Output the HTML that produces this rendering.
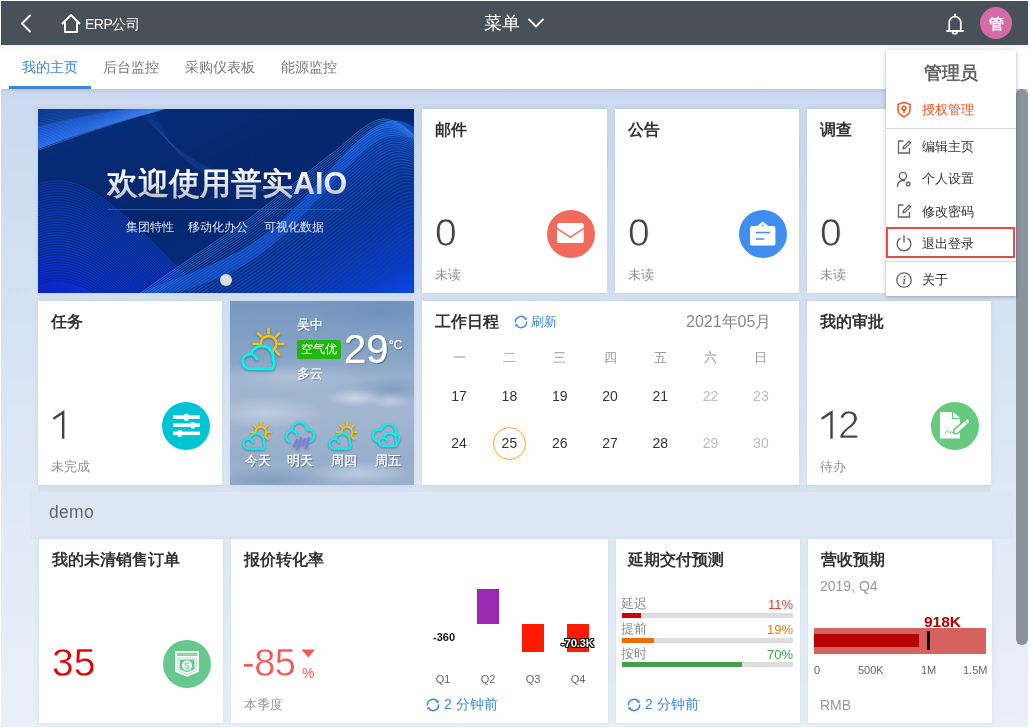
<!DOCTYPE html>
<html><head><meta charset="utf-8">
<style>
*{box-sizing:border-box}
html,body{margin:0;padding:0;width:1031px;height:728px;overflow:hidden;background:#fff;font-family:"Liberation Sans",sans-serif;}
body{will-change:transform}
.a{position:absolute}
.t{position:absolute;white-space:nowrap;line-height:1}
#hdr{left:1px;top:1px;width:1027px;height:44px;background:#4a5058;color:#fff}
#tabs{left:1px;top:45px;width:1027px;height:44px;background:#fff}
.tab{position:absolute;top:14px;font-size:14px;color:#777;line-height:16px;white-space:nowrap}
#main{left:1px;top:89px;width:1027px;height:638px;background:linear-gradient(#cad9ef 0,#d3e1f2 30%,#dee8f5 60%,#eaf0f9 100%)}
.card{position:absolute;background:#fff;overflow:hidden;box-shadow:0 0 5px rgba(40,70,120,.10)}
.ttl{position:absolute;left:13px;top:12px;font-size:16px;font-weight:bold;color:#333;line-height:18px;white-space:nowrap}
.num{position:absolute;left:13px;top:104px;font-size:39px;color:#444;line-height:40px;-webkit-text-stroke:0.7px #fff}
.sub{position:absolute;left:13px;top:158px;font-size:13px;color:#8f8f8f;line-height:16px;white-space:nowrap}
.ws{text-shadow:1px 1px 1px rgba(0,0,0,.4);-webkit-text-stroke:0.25px #fff}
.wi{filter:drop-shadow(0 1px 1px rgba(0,0,0,.35))}
.circ{position:absolute;width:48px;height:48px;border-radius:50%;right:12px;top:101px}
</style></head><body>
<div id="hdr" class="a">
  <svg class="a" style="left:18px;top:12px" width="14" height="22" viewBox="0 0 14 22"><path d="M11 2.5 L3 10.5 L11 18.5" fill="none" stroke="#f2f2f2" stroke-width="2" stroke-linecap="round" stroke-linejoin="round"/></svg>
  <svg class="a" style="left:59px;top:12px" width="22" height="22" viewBox="0 0 22 22"><path d="M2 11 L11 2 L20 11 M5 9 V19 H17 V9" fill="none" stroke="#fff" stroke-width="2" stroke-linejoin="round"/></svg>
  <div class="t" style="left:84px;top:16px;font-size:14px;color:#fff;letter-spacing:-0.5px">ERP公司</div>
  <div class="t" style="left:483px;top:13px;font-size:18px;color:#fff">菜单</div>
  <svg class="a" style="left:525px;top:15px" width="20" height="14" viewBox="0 0 20 14"><path d="M2.5 3 L10 10.5 L17.5 3" fill="none" stroke="#fff" stroke-width="1.9"/></svg>
  <svg class="a" style="left:944px;top:12px" width="20" height="22" viewBox="0 0 20 22"><path d="M10 1.5 V3 M4.2 17.5 V9.5 A5.8 5.8 0 0 1 15.8 9.5 V17.5 M2 18 H18 M7.6 18.5 A2.4 2.4 0 0 0 12.4 18.5" fill="none" stroke="#f4f4f4" stroke-width="1.8" stroke-linecap="round"/></svg>
  <div class="a" style="left:979px;top:6px;width:32px;height:32px;border-radius:50%;background:#d36ba7"></div>
  <div class="t" style="left:988px;top:15px;font-size:15px;font-weight:bold;color:#fff">管</div>
</div>
<div id="tabs" class="a">
  <div class="tab" style="left:21px;color:#3d86d8">我的主页</div>
  <div class="tab" style="left:102px">后台监控</div>
  <div class="tab" style="left:184px">采购仪表板</div>
  <div class="tab" style="left:280px">能源监控</div>
  <div class="a" style="left:8px;top:41px;width:82px;height:3px;background:#3a86dc"></div>
</div>
<div id="main" class="a"></div>
<div class="a" style="left:1px;top:45px;width:1027px;height:5px;background:linear-gradient(rgba(0,0,0,.06),rgba(0,0,0,0))"></div>
<div class="a" style="left:1px;top:89px;width:1027px;height:5px;background:linear-gradient(rgba(60,80,110,.12),rgba(60,80,110,0))"></div>

<!-- banner -->
<div class="card" style="left:38px;top:109px;width:376px;height:184px;background:#062c7a">
<svg class="a" style="left:0;top:0" width="376" height="184" viewBox="0 0 376 184">
  <defs>
    <linearGradient id="bg1" x1="0" y1="0" x2="1" y2="1"><stop offset="0" stop-color="#072e7c"/><stop offset=".45" stop-color="#05266b"/><stop offset="1" stop-color="#083396"/></linearGradient>
    <linearGradient id="rb2" x1="0.4" y1="0.3" x2="1" y2="1"><stop offset="0" stop-color="#0a3ea8"/><stop offset=".45" stop-color="#07318e"/><stop offset=".85" stop-color="#0a3cc4"/><stop offset="1" stop-color="#0c48ee"/></linearGradient>
    <linearGradient id="rb1" x1="0.55" y1="0.9" x2="0" y2="0"><stop offset="0" stop-color="#2a7aff"/><stop offset=".35" stop-color="#1656d8"/><stop offset="1" stop-color="#0b3a98"/></linearGradient>
    <linearGradient id="ll" x1="0.3" y1="0" x2="0.1" y2="1"><stop offset="0" stop-color="#0a3494"/><stop offset=".5" stop-color="#0a38b0"/><stop offset="1" stop-color="#0c30d0"/></linearGradient>
  </defs>
  <rect width="376" height="184" fill="url(#bg1)"/>
  <path d="M-2 75 C20 65 45 70 80 100 C110 125 140 160 170 186 L-2 186 Z" fill="url(#ll)"/><path d="M-2 75.0 C20 65.0 45 70.0 80 100.0 C110 125.0 140 160.0 170 186.0" stroke="#041c5a" stroke-opacity="0.55" stroke-width="1" fill="none"/><path d="M-2 77.6 C20 67.6 45 72.6 80 102.6 C110 127.6 140 162.6 170 188.6" stroke="#041c5a" stroke-opacity="0.55" stroke-width="1" fill="none"/><path d="M-2 80.2 C20 70.2 45 75.2 80 105.2 C110 130.2 140 165.2 170 191.2" stroke="#041c5a" stroke-opacity="0.55" stroke-width="1" fill="none"/><path d="M-2 82.8 C20 72.8 45 77.8 80 107.8 C110 132.8 140 167.8 170 193.8" stroke="#041c5a" stroke-opacity="0.55" stroke-width="1" fill="none"/><path d="M-2 85.4 C20 75.4 45 80.4 80 110.4 C110 135.4 140 170.4 170 196.4" stroke="#041c5a" stroke-opacity="0.55" stroke-width="1" fill="none"/><path d="M-2 88.0 C20 78.0 45 83.0 80 113.0 C110 138.0 140 173.0 170 199.0" stroke="#041c5a" stroke-opacity="0.55" stroke-width="1" fill="none"/><path d="M-2 90.6 C20 80.6 45 85.6 80 115.6 C110 140.6 140 175.6 170 201.6" stroke="#041c5a" stroke-opacity="0.55" stroke-width="1" fill="none"/><path d="M-2 93.2 C20 83.2 45 88.2 80 118.2 C110 143.2 140 178.2 170 204.2" stroke="#041c5a" stroke-opacity="0.55" stroke-width="1" fill="none"/><path d="M-2 95.8 C20 85.8 45 90.8 80 120.8 C110 145.8 140 180.8 170 206.8" stroke="#041c5a" stroke-opacity="0.55" stroke-width="1" fill="none"/><path d="M-2 98.4 C20 88.4 45 93.4 80 123.4 C110 148.4 140 183.4 170 209.4" stroke="#041c5a" stroke-opacity="0.55" stroke-width="1" fill="none"/><path d="M-2 101.0 C20 91.0 45 96.0 80 126.0 C110 151.0 140 186.0 170 212.0" stroke="#041c5a" stroke-opacity="0.55" stroke-width="1" fill="none"/><path d="M-2 103.6 C20 93.6 45 98.6 80 128.6 C110 153.6 140 188.6 170 214.6" stroke="#041c5a" stroke-opacity="0.55" stroke-width="1" fill="none"/><path d="M-2 106.2 C20 96.2 45 101.2 80 131.2 C110 156.2 140 191.2 170 217.2" stroke="#041c5a" stroke-opacity="0.55" stroke-width="1" fill="none"/><path d="M-2 108.8 C20 98.8 45 103.8 80 133.8 C110 158.8 140 193.8 170 219.8" stroke="#041c5a" stroke-opacity="0.55" stroke-width="1" fill="none"/><path d="M-2 111.4 C20 101.4 45 106.4 80 136.4 C110 161.4 140 196.4 170 222.4" stroke="#041c5a" stroke-opacity="0.55" stroke-width="1" fill="none"/><path d="M-2 114.0 C20 104.0 45 109.0 80 139.0 C110 164.0 140 199.0 170 225.0" stroke="#041c5a" stroke-opacity="0.55" stroke-width="1" fill="none"/><path d="M-2 116.6 C20 106.6 45 111.6 80 141.6 C110 166.6 140 201.6 170 227.6" stroke="#041c5a" stroke-opacity="0.55" stroke-width="1" fill="none"/><path d="M-2 119.2 C20 109.2 45 114.2 80 144.2 C110 169.2 140 204.2 170 230.2" stroke="#041c5a" stroke-opacity="0.55" stroke-width="1" fill="none"/><path d="M-2 121.8 C20 111.8 45 116.8 80 146.8 C110 171.8 140 206.8 170 232.8" stroke="#041c5a" stroke-opacity="0.55" stroke-width="1" fill="none"/><path d="M-2 124.4 C20 114.4 45 119.4 80 149.4 C110 174.4 140 209.4 170 235.4" stroke="#041c5a" stroke-opacity="0.55" stroke-width="1" fill="none"/><path d="M-2 127.0 C20 117.0 45 122.0 80 152.0 C110 177.0 140 212.0 170 238.0" stroke="#041c5a" stroke-opacity="0.55" stroke-width="1" fill="none"/><path d="M-2 129.6 C20 119.6 45 124.6 80 154.6 C110 179.6 140 214.6 170 240.6" stroke="#041c5a" stroke-opacity="0.55" stroke-width="1" fill="none"/><path d="M-2 132.2 C20 122.2 45 127.2 80 157.2 C110 182.2 140 217.2 170 243.2" stroke="#041c5a" stroke-opacity="0.55" stroke-width="1" fill="none"/><path d="M-2 134.8 C20 124.8 45 129.8 80 159.8 C110 184.8 140 219.8 170 245.8" stroke="#041c5a" stroke-opacity="0.55" stroke-width="1" fill="none"/><path d="M-2 137.4 C20 127.4 45 132.4 80 162.4 C110 187.4 140 222.4 170 248.4" stroke="#041c5a" stroke-opacity="0.55" stroke-width="1" fill="none"/><path d="M-2 140.0 C20 130.0 45 135.0 80 165.0 C110 190.0 140 225.0 170 251.0" stroke="#041c5a" stroke-opacity="0.55" stroke-width="1" fill="none"/><path d="M-2 142.6 C20 132.6 45 137.6 80 167.6 C110 192.6 140 227.6 170 253.6" stroke="#041c5a" stroke-opacity="0.55" stroke-width="1" fill="none"/><path d="M-2 145.2 C20 135.2 45 140.2 80 170.2 C110 195.2 140 230.2 170 256.2" stroke="#041c5a" stroke-opacity="0.55" stroke-width="1" fill="none"/><path d="M-2 147.8 C20 137.8 45 142.8 80 172.8 C110 197.8 140 232.8 170 258.8" stroke="#041c5a" stroke-opacity="0.55" stroke-width="1" fill="none"/><path d="M-2 150.4 C20 140.4 45 145.4 80 175.4 C110 200.4 140 235.4 170 261.4" stroke="#041c5a" stroke-opacity="0.55" stroke-width="1" fill="none"/><path d="M-2 153.0 C20 143.0 45 148.0 80 178.0 C110 203.0 140 238.0 170 264.0" stroke="#041c5a" stroke-opacity="0.55" stroke-width="1" fill="none"/><path d="M-2 155.6 C20 145.6 45 150.6 80 180.6 C110 205.6 140 240.6 170 266.6" stroke="#041c5a" stroke-opacity="0.55" stroke-width="1" fill="none"/><path d="M-2 158.2 C20 148.2 45 153.2 80 183.2 C110 208.2 140 243.2 170 269.2" stroke="#041c5a" stroke-opacity="0.55" stroke-width="1" fill="none"/><path d="M-2 160.8 C20 150.8 45 155.8 80 185.8 C110 210.8 140 245.8 170 271.8" stroke="#041c5a" stroke-opacity="0.55" stroke-width="1" fill="none"/><path d="M-2 163.4 C20 153.4 45 158.4 80 188.4 C110 213.4 140 248.4 170 274.4" stroke="#041c5a" stroke-opacity="0.55" stroke-width="1" fill="none"/><path d="M-2 166.0 C20 156.0 45 161.0 80 191.0 C110 216.0 140 251.0 170 277.0" stroke="#041c5a" stroke-opacity="0.55" stroke-width="1" fill="none"/><path d="M-2 168.6 C20 158.6 45 163.6 80 193.6 C110 218.6 140 253.6 170 279.6" stroke="#041c5a" stroke-opacity="0.55" stroke-width="1" fill="none"/><path d="M-2 171.2 C20 161.2 45 166.2 80 196.2 C110 221.2 140 256.2 170 282.2" stroke="#041c5a" stroke-opacity="0.55" stroke-width="1" fill="none"/><path d="M-2 173.8 C20 163.8 45 168.8 80 198.8 C110 223.8 140 258.8 170 284.8" stroke="#041c5a" stroke-opacity="0.55" stroke-width="1" fill="none"/><path d="M-2 176.4 C20 166.4 45 171.4 80 201.4 C110 226.4 140 261.4 170 287.4" stroke="#041c5a" stroke-opacity="0.55" stroke-width="1" fill="none"/><radialGradient id="blc" cx="0" cy="1" r=".5"><stop offset="0" stop-color="#0c1fc0" stop-opacity=".9"/><stop offset="1" stop-color="#0c1fc0" stop-opacity="0"/></radialGradient><rect x="-2" y="100" width="130" height="86" fill="url(#blc)"/>
  <path d="M95.0 186.0 C150.0 165.0 200.0 150.0 240.0 115.0 C280.0 80.0 320.0 20.0 350.0 12.0 C362.0 10.0 370.0 14.0 380.0 20.0 L380 186 Z" fill="url(#rb2)"/>
  <path d="M95.0 186.0 C150.0 165.0 200.0 150.0 240.0 115.0 C280.0 80.0 320.0 20.0 350.0 12.0 C362.0 10.0 370.0 14.0 380.0 20.0 L394 32 C370 28 362 26 350 28 C320 36 280 96 240 131 C200 168 150 183 117 186 Z" fill="#1a62ea" opacity=".45"/>
  <path d="M-2 -2 L-2 18 C30 10 60 4 100 -2 Z" fill="#0a3a94" opacity=".8"/><path d="M-2 41 C30 28 80 12 134 -2 L100 -2 C60 4 30 10 -2 18 Z" fill="url(#rb1)"/>
  <path d="M95.0 -2 C130 30.0 150 60.0 220.0 75.0" stroke="#2c64c8" stroke-opacity="0.18" stroke-width="0.6" fill="none"/><path d="M96.2 -2 C130 30.6 150 60.6 220.6 75.5" stroke="#2c64c8" stroke-opacity="0.18" stroke-width="0.6" fill="none"/><path d="M97.4 -2 C130 31.2 150 61.2 221.2 75.9" stroke="#2c64c8" stroke-opacity="0.18" stroke-width="0.6" fill="none"/><path d="M98.5 -2 C130 31.8 150 61.8 221.8 76.4" stroke="#2c64c8" stroke-opacity="0.18" stroke-width="0.6" fill="none"/><path d="M99.7 -2 C130 32.4 150 62.4 222.4 76.9" stroke="#2c64c8" stroke-opacity="0.18" stroke-width="0.6" fill="none"/><path d="M100.9 -2 C130 32.9 150 62.9 222.9 77.4" stroke="#2c64c8" stroke-opacity="0.18" stroke-width="0.6" fill="none"/><path d="M102.1 -2 C130 33.5 150 63.5 223.5 77.8" stroke="#2c64c8" stroke-opacity="0.18" stroke-width="0.6" fill="none"/><path d="M103.2 -2 C130 34.1 150 64.1 224.1 78.3" stroke="#2c64c8" stroke-opacity="0.18" stroke-width="0.6" fill="none"/><path d="M104.4 -2 C130 34.7 150 64.7 224.7 78.8" stroke="#2c64c8" stroke-opacity="0.18" stroke-width="0.6" fill="none"/><path d="M105.6 -2 C130 35.3 150 65.3 225.3 79.2" stroke="#2c64c8" stroke-opacity="0.18" stroke-width="0.6" fill="none"/><path d="M106.8 -2 C130 35.9 150 65.9 225.9 79.7" stroke="#2c64c8" stroke-opacity="0.18" stroke-width="0.6" fill="none"/><path d="M107.9 -2 C130 36.5 150 66.5 226.5 80.2" stroke="#2c64c8" stroke-opacity="0.18" stroke-width="0.6" fill="none"/><path d="M109.1 -2 C130 37.1 150 67.1 227.1 80.6" stroke="#2c64c8" stroke-opacity="0.18" stroke-width="0.6" fill="none"/><path d="M110.3 -2 C130 37.6 150 67.6 227.6 81.1" stroke="#2c64c8" stroke-opacity="0.18" stroke-width="0.6" fill="none"/><path d="M111.5 -2 C130 38.2 150 68.2 228.2 81.6" stroke="#2c64c8" stroke-opacity="0.18" stroke-width="0.6" fill="none"/><path d="M112.6 -2 C130 38.8 150 68.8 228.8 82.1" stroke="#2c64c8" stroke-opacity="0.18" stroke-width="0.6" fill="none"/><path d="M113.8 -2 C130 39.4 150 69.4 229.4 82.5" stroke="#2c64c8" stroke-opacity="0.18" stroke-width="0.6" fill="none"/><path d="M115.0 -2 C130 40.0 150 70.0 230.0 83.0" stroke="#2c64c8" stroke-opacity="0.18" stroke-width="0.6" fill="none"/>
  
  <path d="M-2 42.0 C30 30.0 80 12.0 134.0 -2" stroke="#5aa0ff" stroke-opacity="0.70" stroke-width="0.6" fill="none"/><path d="M-2 40.3 C30 28.7 80 11.4 132.7 -2" stroke="#5aa0ff" stroke-opacity="0.68" stroke-width="0.6" fill="none"/><path d="M-2 38.5 C30 27.4 80 10.8 131.4 -2" stroke="#5aa0ff" stroke-opacity="0.65" stroke-width="0.6" fill="none"/><path d="M-2 36.8 C30 26.1 80 10.2 130.1 -2" stroke="#5aa0ff" stroke-opacity="0.63" stroke-width="0.6" fill="none"/><path d="M-2 35.0 C30 24.8 80 9.6 128.8 -2" stroke="#5aa0ff" stroke-opacity="0.60" stroke-width="0.6" fill="none"/><path d="M-2 33.3 C30 23.5 80 9.0 127.5 -2" stroke="#5aa0ff" stroke-opacity="0.58" stroke-width="0.6" fill="none"/><path d="M-2 31.6 C30 22.2 80 8.3 126.2 -2" stroke="#5aa0ff" stroke-opacity="0.56" stroke-width="0.6" fill="none"/><path d="M-2 29.8 C30 20.9 80 7.7 124.9 -2" stroke="#5aa0ff" stroke-opacity="0.53" stroke-width="0.6" fill="none"/><path d="M-2 28.1 C30 19.6 80 7.1 123.6 -2" stroke="#5aa0ff" stroke-opacity="0.51" stroke-width="0.6" fill="none"/><path d="M-2 26.3 C30 18.3 80 6.5 122.3 -2" stroke="#5aa0ff" stroke-opacity="0.48" stroke-width="0.6" fill="none"/><path d="M-2 24.6 C30 17.0 80 5.9 121.0 -2" stroke="#5aa0ff" stroke-opacity="0.46" stroke-width="0.6" fill="none"/><path d="M-2 22.9 C30 15.7 80 5.3 119.7 -2" stroke="#5aa0ff" stroke-opacity="0.44" stroke-width="0.6" fill="none"/><path d="M-2 21.1 C30 14.3 80 4.7 118.3 -2" stroke="#5aa0ff" stroke-opacity="0.41" stroke-width="0.6" fill="none"/><path d="M-2 19.4 C30 13.0 80 4.1 117.0 -2" stroke="#5aa0ff" stroke-opacity="0.39" stroke-width="0.6" fill="none"/><path d="M-2 17.7 C30 11.7 80 3.5 115.7 -2" stroke="#5aa0ff" stroke-opacity="0.37" stroke-width="0.6" fill="none"/><path d="M-2 15.9 C30 10.4 80 2.9 114.4 -2" stroke="#5aa0ff" stroke-opacity="0.34" stroke-width="0.6" fill="none"/><path d="M-2 14.2 C30 9.1 80 2.3 113.1 -2" stroke="#5aa0ff" stroke-opacity="0.32" stroke-width="0.6" fill="none"/><path d="M-2 12.4 C30 7.8 80 1.7 111.8 -2" stroke="#5aa0ff" stroke-opacity="0.29" stroke-width="0.6" fill="none"/><path d="M-2 10.7 C30 6.5 80 1.0 110.5 -2" stroke="#5aa0ff" stroke-opacity="0.27" stroke-width="0.6" fill="none"/><path d="M-2 9.0 C30 5.2 80 0.4 109.2 -2" stroke="#5aa0ff" stroke-opacity="0.25" stroke-width="0.6" fill="none"/><path d="M-2 7.2 C30 3.9 80 -0.2 107.9 -2" stroke="#5aa0ff" stroke-opacity="0.22" stroke-width="0.6" fill="none"/><path d="M-2 5.5 C30 2.6 80 -0.8 106.6 -2" stroke="#5aa0ff" stroke-opacity="0.20" stroke-width="0.6" fill="none"/><path d="M-2 3.7 C30 1.3 80 -1.4 105.3 -2" stroke="#5aa0ff" stroke-opacity="0.17" stroke-width="0.6" fill="none"/><path d="M-2 2.0 C30 0.0 80 -2.0 104.0 -2" stroke="#5aa0ff" stroke-opacity="0.15" stroke-width="0.6" fill="none"/>
  
<path d="M100.0 186.0 C150.0 150.0 190.0 125.0 212.0 109.0 C250.0 80.0 270.0 62.0 300.0 40.0 C320.0 22.0 335.0 10.0 345.0 10.0 C358.0 10.0 368.0 18.0 380.0 30.0" stroke="#4d9bff" stroke-opacity="0.88" stroke-width="0.6" fill="none"/><path d="M100.9 187.6 C150.9 151.6 190.9 126.6 212.9 110.6 C250.9 81.6 270.9 63.6 300.9 41.6 C320.9 23.6 335.9 11.6 345.9 11.6 C358.9 11.6 368.9 19.6 380.9 31.6" stroke="#4d9bff" stroke-opacity="0.86" stroke-width="0.6" fill="none"/><path d="M101.8 189.2 C151.8 153.2 191.8 128.2 213.8 112.2 C251.8 83.2 271.8 65.2 301.8 43.2 C321.8 25.2 336.8 13.2 346.8 13.2 C359.8 13.2 369.8 21.2 381.8 33.2" stroke="#4d9bff" stroke-opacity="0.84" stroke-width="0.6" fill="none"/><path d="M102.7 190.9 C152.7 154.9 192.7 129.9 214.7 113.9 C252.7 84.9 272.7 66.9 302.7 44.9 C322.7 26.9 337.7 14.9 347.7 14.9 C360.7 14.9 370.7 22.9 382.7 34.9" stroke="#4d9bff" stroke-opacity="0.82" stroke-width="0.6" fill="none"/><path d="M103.6 192.7 C153.6 156.7 193.6 131.7 215.6 115.7 C253.6 86.7 273.6 68.7 303.6 46.7 C323.6 28.7 338.6 16.7 348.6 16.7 C361.6 16.7 371.6 24.7 383.6 36.7" stroke="#4d9bff" stroke-opacity="0.81" stroke-width="0.6" fill="none"/><path d="M104.4 194.5 C154.4 158.5 194.4 133.5 216.4 117.5 C254.4 88.5 274.4 70.5 304.4 48.5 C324.4 30.5 339.4 18.5 349.4 18.5 C362.4 18.5 372.4 26.5 384.4 38.5" stroke="#4d9bff" stroke-opacity="0.79" stroke-width="0.6" fill="none"/><path d="M105.3 196.4 C155.3 160.4 195.3 135.4 217.3 119.4 C255.3 90.4 275.3 72.4 305.3 50.4 C325.3 32.4 340.3 20.4 350.3 20.4 C363.3 20.4 373.3 28.4 385.3 40.4" stroke="#3a80f0" stroke-opacity="0.77" stroke-width="0.6" fill="none"/><path d="M106.2 198.3 C156.2 162.3 196.2 137.3 218.2 121.3 C256.2 92.3 276.2 74.3 306.2 52.3 C326.2 34.3 341.2 22.3 351.2 22.3 C364.2 22.3 374.2 30.3 386.2 42.3" stroke="#3a80f0" stroke-opacity="0.75" stroke-width="0.6" fill="none"/><path d="M107.1 200.3 C157.1 164.3 197.1 139.3 219.1 123.3 C257.1 94.3 277.1 76.3 307.1 54.3 C327.1 36.3 342.1 24.3 352.1 24.3 C365.1 24.3 375.1 32.3 387.1 44.3" stroke="#3a80f0" stroke-opacity="0.73" stroke-width="0.6" fill="none"/><path d="M108.0 202.4 C158.0 166.4 198.0 141.4 220.0 125.4 C258.0 96.4 278.0 78.4 308.0 56.4 C328.0 38.4 343.0 26.4 353.0 26.4 C366.0 26.4 376.0 34.4 388.0 46.4" stroke="#3a80f0" stroke-opacity="0.72" stroke-width="0.6" fill="none"/><path d="M108.9 204.5 C158.9 168.5 198.9 143.5 220.9 127.5 C258.9 98.5 278.9 80.5 308.9 58.5 C328.9 40.5 343.9 28.5 353.9 28.5 C366.9 28.5 376.9 36.5 388.9 48.5" stroke="#3a80f0" stroke-opacity="0.70" stroke-width="0.6" fill="none"/><path d="M109.8 206.7 C159.8 170.7 199.8 145.7 221.8 129.7 C259.8 100.7 279.8 82.7 309.8 60.7 C329.8 42.7 344.8 30.7 354.8 30.7 C367.8 30.7 377.8 38.7 389.8 50.7" stroke="#3a80f0" stroke-opacity="0.68" stroke-width="0.6" fill="none"/><path d="M110.7 208.9 C160.7 172.9 200.7 147.9 222.7 131.9 C260.7 102.9 280.7 84.9 310.7 62.9 C330.7 44.9 345.7 32.9 355.7 32.9 C368.7 32.9 378.7 40.9 390.7 52.9" stroke="#3a80f0" stroke-opacity="0.66" stroke-width="0.6" fill="none"/><path d="M111.6 211.2 C161.6 175.2 201.6 150.2 223.6 134.2 C261.6 105.2 281.6 87.2 311.6 65.2 C331.6 47.2 346.6 35.2 356.6 35.2 C369.6 35.2 379.6 43.2 391.6 55.2" stroke="#3a80f0" stroke-opacity="0.64" stroke-width="0.6" fill="none"/><path d="M112.4 213.6 C162.4 177.6 202.4 152.6 224.4 136.6 C262.4 107.6 282.4 89.6 312.4 67.6 C332.4 49.6 347.4 37.6 357.4 37.6 C370.4 37.6 380.4 45.6 392.4 57.6" stroke="#3a80f0" stroke-opacity="0.63" stroke-width="0.6" fill="none"/><path d="M113.3 216.0 C163.3 180.0 203.3 155.0 225.3 139.0 C263.3 110.0 283.3 92.0 313.3 70.0 C333.3 52.0 348.3 40.0 358.3 40.0 C371.3 40.0 381.3 48.0 393.3 60.0" stroke="#3a80f0" stroke-opacity="0.61" stroke-width="0.6" fill="none"/><path d="M114.2 218.5 C164.2 182.5 204.2 157.5 226.2 141.5 C264.2 112.5 284.2 94.5 314.2 72.5 C334.2 54.5 349.2 42.5 359.2 42.5 C372.2 42.5 382.2 50.5 394.2 62.5" stroke="#3a80f0" stroke-opacity="0.59" stroke-width="0.6" fill="none"/><path d="M115.1 221.0 C165.1 185.0 205.1 160.0 227.1 144.0 C265.1 115.0 285.1 97.0 315.1 75.0 C335.1 57.0 350.1 45.0 360.1 45.0 C373.1 45.0 383.1 53.0 395.1 65.0" stroke="#3a80f0" stroke-opacity="0.58" stroke-width="0.6" fill="none"/><path d="M116.0 223.6 C166.0 187.6 206.0 162.6 228.0 146.6 C266.0 117.6 286.0 99.6 316.0 77.6 C336.0 59.6 351.0 47.6 361.0 47.6 C374.0 47.6 384.0 55.6 396.0 67.6" stroke="#3a80f0" stroke-opacity="0.56" stroke-width="0.6" fill="none"/><path d="M116.9 226.3 C166.9 190.3 206.9 165.3 228.9 149.3 C266.9 120.3 286.9 102.3 316.9 80.3 C336.9 62.3 351.9 50.3 361.9 50.3 C374.9 50.3 384.9 58.3 396.9 70.3" stroke="#3a80f0" stroke-opacity="0.54" stroke-width="0.6" fill="none"/><path d="M117.8 229.0 C167.8 193.0 207.8 168.0 229.8 152.0 C267.8 123.0 287.8 105.0 317.8 83.0 C337.8 65.0 352.8 53.0 362.8 53.0 C375.8 53.0 385.8 61.0 397.8 73.0" stroke="#3a80f0" stroke-opacity="0.53" stroke-width="0.6" fill="none"/><path d="M118.7 231.7 C168.7 195.7 208.7 170.7 230.7 154.7 C268.7 125.7 288.7 107.7 318.7 85.7 C338.7 67.7 353.7 55.7 363.7 55.7 C376.7 55.7 386.7 63.7 398.7 75.7" stroke="#3a80f0" stroke-opacity="0.51" stroke-width="0.6" fill="none"/><path d="M119.6 234.6 C169.6 198.6 209.6 173.6 231.6 157.6 C269.6 128.6 289.6 110.6 319.6 88.6 C339.6 70.6 354.6 58.6 364.6 58.6 C377.6 58.6 387.6 66.6 399.6 78.6" stroke="#3a80f0" stroke-opacity="0.49" stroke-width="0.6" fill="none"/><path d="M120.4 237.5 C170.4 201.5 210.4 176.5 232.4 160.5 C270.4 131.5 290.4 113.5 320.4 91.5 C340.4 73.5 355.4 61.5 365.4 61.5 C378.4 61.5 388.4 69.5 400.4 81.5" stroke="#3a80f0" stroke-opacity="0.48" stroke-width="0.6" fill="none"/><path d="M121.3 240.4 C171.3 204.4 211.3 179.4 233.3 163.4 C271.3 134.4 291.3 116.4 321.3 94.4 C341.3 76.4 356.3 64.4 366.3 64.4 C379.3 64.4 389.3 72.4 401.3 84.4" stroke="#3a80f0" stroke-opacity="0.46" stroke-width="0.6" fill="none"/><path d="M122.2 243.4 C172.2 207.4 212.2 182.4 234.2 166.4 C272.2 137.4 292.2 119.4 322.2 97.4 C342.2 79.4 357.2 67.4 367.2 67.4 C380.2 67.4 390.2 75.4 402.2 87.4" stroke="#3a80f0" stroke-opacity="0.44" stroke-width="0.6" fill="none"/><path d="M123.1 246.5 C173.1 210.5 213.1 185.5 235.1 169.5 C273.1 140.5 293.1 122.5 323.1 100.5 C343.1 82.5 358.1 70.5 368.1 70.5 C381.1 70.5 391.1 78.5 403.1 90.5" stroke="#3a80f0" stroke-opacity="0.43" stroke-width="0.6" fill="none"/><path d="M124.0 249.6 C174.0 213.6 214.0 188.6 236.0 172.6 C274.0 143.6 294.0 125.6 324.0 103.6 C344.0 85.6 359.0 73.6 369.0 73.6 C382.0 73.6 392.0 81.6 404.0 93.6" stroke="#3a80f0" stroke-opacity="0.41" stroke-width="0.6" fill="none"/><path d="M124.9 252.8 C174.9 216.8 214.9 191.8 236.9 175.8 C274.9 146.8 294.9 128.8 324.9 106.8 C344.9 88.8 359.9 76.8 369.9 76.8 C382.9 76.8 392.9 84.8 404.9 96.8" stroke="#3a80f0" stroke-opacity="0.40" stroke-width="0.6" fill="none"/><path d="M125.8 256.0 C175.8 220.0 215.8 195.0 237.8 179.0 C275.8 150.0 295.8 132.0 325.8 110.0 C345.8 92.0 360.8 80.0 370.8 80.0 C383.8 80.0 393.8 88.0 405.8 100.0" stroke="#3a80f0" stroke-opacity="0.38" stroke-width="0.6" fill="none"/><path d="M126.7 259.3 C176.7 223.3 216.7 198.3 238.7 182.3 C276.7 153.3 296.7 135.3 326.7 113.3 C346.7 95.3 361.7 83.3 371.7 83.3 C384.7 83.3 394.7 91.3 406.7 103.3" stroke="#3a80f0" stroke-opacity="0.37" stroke-width="0.6" fill="none"/><path d="M127.6 262.7 C177.6 226.7 217.6 201.7 239.6 185.7 C277.6 156.7 297.6 138.7 327.6 116.7 C347.6 98.7 362.6 86.7 372.6 86.7 C385.6 86.7 395.6 94.7 407.6 106.7" stroke="#3a80f0" stroke-opacity="0.35" stroke-width="0.6" fill="none"/><path d="M128.4 266.1 C178.4 230.1 218.4 205.1 240.4 189.1 C278.4 160.1 298.4 142.1 328.4 120.1 C348.4 102.1 363.4 90.1 373.4 90.1 C386.4 90.1 396.4 98.1 408.4 110.1" stroke="#3a80f0" stroke-opacity="0.34" stroke-width="0.6" fill="none"/><path d="M129.3 269.6 C179.3 233.6 219.3 208.6 241.3 192.6 C279.3 163.6 299.3 145.6 329.3 123.6 C349.3 105.6 364.3 93.6 374.3 93.6 C387.3 93.6 397.3 101.6 409.3 113.6" stroke="#3a80f0" stroke-opacity="0.32" stroke-width="0.6" fill="none"/><path d="M130.2 273.1 C180.2 237.1 220.2 212.1 242.2 196.1 C280.2 167.1 300.2 149.1 330.2 127.1 C350.2 109.1 365.2 97.1 375.2 97.1 C388.2 97.1 398.2 105.1 410.2 117.1" stroke="#3a80f0" stroke-opacity="0.31" stroke-width="0.6" fill="none"/><path d="M131.1 276.7 C181.1 240.7 221.1 215.7 243.1 199.7 C281.1 170.7 301.1 152.7 331.1 130.7 C351.1 112.7 366.1 100.7 376.1 100.7 C389.1 100.7 399.1 108.7 411.1 120.7" stroke="#3a80f0" stroke-opacity="0.30" stroke-width="0.6" fill="none"/><path d="M132.0 280.4 C182.0 244.4 222.0 219.4 244.0 203.4 C282.0 174.4 302.0 156.4 332.0 134.4 C352.0 116.4 367.0 104.4 377.0 104.4 C390.0 104.4 400.0 112.4 412.0 124.4" stroke="#3a80f0" stroke-opacity="0.28" stroke-width="0.6" fill="none"/><path d="M132.9 284.1 C182.9 248.1 222.9 223.1 244.9 207.1 C282.9 178.1 302.9 160.1 332.9 138.1 C352.9 120.1 367.9 108.1 377.9 108.1 C390.9 108.1 400.9 116.1 412.9 128.1" stroke="#3a80f0" stroke-opacity="0.27" stroke-width="0.6" fill="none"/><path d="M133.8 287.9 C183.8 251.9 223.8 226.9 245.8 210.9 C283.8 181.9 303.8 163.9 333.8 141.9 C353.8 123.9 368.8 111.9 378.8 111.9 C391.8 111.9 401.8 119.9 413.8 131.9" stroke="#3a80f0" stroke-opacity="0.26" stroke-width="0.6" fill="none"/><path d="M134.7 291.7 C184.7 255.7 224.7 230.7 246.7 214.7 C284.7 185.7 304.7 167.7 334.7 145.7 C354.7 127.7 369.7 115.7 379.7 115.7 C392.7 115.7 402.7 123.7 414.7 135.7" stroke="#3a80f0" stroke-opacity="0.24" stroke-width="0.6" fill="none"/><path d="M135.6 295.6 C185.6 259.6 225.6 234.6 247.6 218.6 C285.6 189.6 305.6 171.6 335.6 149.6 C355.6 131.6 370.6 119.6 380.6 119.6 C393.6 119.6 403.6 127.6 415.6 139.6" stroke="#3a80f0" stroke-opacity="0.23" stroke-width="0.6" fill="none"/><path d="M136.4 299.6 C186.4 263.6 226.4 238.6 248.4 222.6 C286.4 193.6 306.4 175.6 336.4 153.6 C356.4 135.6 371.4 123.6 381.4 123.6 C394.4 123.6 404.4 131.6 416.4 143.6" stroke="#3a80f0" stroke-opacity="0.22" stroke-width="0.6" fill="none"/><path d="M137.3 303.6 C187.3 267.6 227.3 242.6 249.3 226.6 C287.3 197.6 307.3 179.6 337.3 157.6 C357.3 139.6 372.3 127.6 382.3 127.6 C395.3 127.6 405.3 135.6 417.3 147.6" stroke="#3a80f0" stroke-opacity="0.21" stroke-width="0.6" fill="none"/><path d="M138.2 307.7 C188.2 271.7 228.2 246.7 250.2 230.7 C288.2 201.7 308.2 183.7 338.2 161.7 C358.2 143.7 373.2 131.7 383.2 131.7 C396.2 131.7 406.2 139.7 418.2 151.7" stroke="#3a80f0" stroke-opacity="0.20" stroke-width="0.6" fill="none"/><path d="M139.1 311.8 C189.1 275.8 229.1 250.8 251.1 234.8 C289.1 205.8 309.1 187.8 339.1 165.8 C359.1 147.8 374.1 135.8 384.1 135.8 C397.1 135.8 407.1 143.8 419.1 155.8" stroke="#3a80f0" stroke-opacity="0.19" stroke-width="0.6" fill="none"/><path d="M140.0 316.0 C190.0 280.0 230.0 255.0 252.0 239.0 C290.0 210.0 310.0 192.0 340.0 170.0 C360.0 152.0 375.0 140.0 385.0 140.0 C398.0 140.0 408.0 148.0 420.0 160.0" stroke="#3a80f0" stroke-opacity="0.18" stroke-width="0.6" fill="none"/></svg>

  <div class="t" style="left:69px;top:59px;font-size:30.5px;font-weight:bold;color:transparent;background:linear-gradient(#ffffff 20%,#c4c6cf 90%);-webkit-background-clip:text;background-clip:text">欢迎使用普实AIO</div>
  <div class="a" style="left:70px;top:100px;width:236px;height:1px;background:#1d5cc8"></div>
  <div class="t" style="left:88px;top:112px;font-size:12.2px;color:#dfe3ee">集团特性</div><div class="t" style="left:150px;top:112px;font-size:12.2px;color:#dfe3ee">移动化办公</div><div class="t" style="left:225.5px;top:112px;font-size:12.2px;color:#dfe3ee">可视化数据</div>
  <div class="a" style="left:182px;top:165px;width:12px;height:12px;border-radius:50%;background:#ddd"></div>
</div>

<!-- mail -->
<div class="card" style="left:422px;top:109px;width:185px;height:184px">
  <div class="ttl">邮件</div>
  <div class="num">0</div>
  <div class="sub">未读</div>
  <div class="circ" style="background:#f06b5e"><svg width="48" height="48" viewBox="0 0 48 48"><rect x="10" y="13" width="26.8" height="20" rx="2.2" fill="#fff"/><path d="M10 18.3 L23.4 27.3 L36.8 18.3" fill="none" stroke="#f06b5e" stroke-width="1.4"/></svg></div>
</div>
<!-- notice -->
<div class="card" style="left:615px;top:109px;width:184px;height:184px">
  <div class="ttl">公告</div>
  <div class="num">0</div>
  <div class="sub">未读</div>
  <div class="circ" style="background:#3f8ef0"><svg width="48" height="48" viewBox="0 0 48 48"><path d="M17.5 16.5 L23.7 11.5 L30 16.5 Z" fill="#fff"/><rect x="11" y="16" width="25.4" height="19.6" rx="2.2" fill="#fff"/><circle cx="23.7" cy="15.6" r="0.9" fill="#3f8ef0"/><path d="M16.8 22.6 H31 M16.8 29 H25.2" stroke="#3f8ef0" stroke-width="1.5"/></svg></div>
</div>
<!-- survey -->
<div class="card" style="left:807px;top:109px;width:184px;height:184px">
  <div class="ttl">调查</div>
  <div class="num">0</div>
  <div class="sub">未读</div>
</div>
<!-- task -->
<div class="card" style="left:38px;top:301px;width:184px;height:184px">
  <div class="ttl">任务</div>
  <svg class="a" style="left:0;top:0" width="60" height="150" viewBox="0 0 60 150"><path d="M25.2 137.7 V111.2 L15.4 117.8" fill="none" stroke="#444" stroke-width="2.4" stroke-linejoin="miter"/></svg>
  <div class="sub">未完成</div>
  <div class="circ" style="background:#00c4d3"><svg width="48" height="48" viewBox="0 0 48 48"><g fill="#fff"><rect x="11" y="13.3" width="27" height="3.6"/><rect x="11" y="21.4" width="27" height="3.5"/><rect x="11" y="29.6" width="27" height="3.5"/><rect x="22.2" y="11.8" width="4.2" height="6.9" rx="1"/><rect x="28.7" y="20.2" width="4.2" height="6.4" rx="1"/><rect x="15.6" y="28.2" width="4.2" height="6.6" rx="1"/></g></svg></div>
</div>
<!-- weather -->
<div class="card" style="left:230px;top:301px;width:184px;height:184px;background:
radial-gradient(ellipse 28px 9px at 125px 97px,rgba(232,238,246,.6),rgba(232,238,246,0)),
radial-gradient(ellipse 20px 8px at 160px 100px,rgba(225,232,244,.45),rgba(225,232,244,0)),
radial-gradient(ellipse 45px 12px at 165px 88px,rgba(95,130,175,.45),rgba(95,130,175,0)),
radial-gradient(ellipse 60px 16px at 35px 112px,rgba(225,232,242,.45),rgba(225,232,242,0)),
radial-gradient(ellipse 90px 14px at 60px 76px,rgba(200,214,232,.45),rgba(200,214,232,0)),
radial-gradient(ellipse 60px 14px at 40px 180px,rgba(100,132,172,.45),rgba(100,132,172,0)),
radial-gradient(ellipse 50px 12px at 130px 172px,rgba(225,232,244,.5),rgba(225,232,244,0)),
radial-gradient(ellipse 70px 20px at 150px 10px,rgba(95,135,185,.45),rgba(95,135,185,0)),
linear-gradient(#7798c0,#87a3c5 30%,#a0b5cf 48%,#a2b6cf 62%,#96aecb 85%,#9ab1cc)">
  <svg class="a wi" style="left:6px;top:19px" width="60.0" height="60.0" viewBox="0 0 60 60"><path d="M24.8 24 A7.8 7.8 0 1 1 36.5 30.75 M32.6 13.4 V9 M40.1 16.5 L43.2 13.4 M43 24 H47.4 M40.1 31.5 L43.2 34.6 M25.1 16.5 L22 13.4 M22.2 24 H17.6" fill="none" stroke="#fdc30c" stroke-width="2.6" stroke-linecap="round"/><path d="M15.4 33.1 A11.3 11.3 0 0 1 36.9 39.9 A6.3 6.3 0 0 1 36 48.8 L14 48.8 A7.3 7.3 0 1 1 20.9 39" fill="none" stroke="#00f6f6" stroke-width="3.0" stroke-linecap="round" stroke-linejoin="round"/></svg>
  <svg class="a wi" style="left:8.8px;top:114.9px" width="40.3" height="40.3" viewBox="0 0 60 60"><path d="M24.8 24 A7.8 7.8 0 1 1 36.5 30.75 M32.6 13.4 V9 M40.1 16.5 L43.2 13.4 M43 24 H47.4 M40.1 31.5 L43.2 34.6 M25.1 16.5 L22 13.4 M22.2 24 H17.6" fill="none" stroke="#fdc30c" stroke-width="2.6" stroke-linecap="round"/><path d="M15.4 33.1 A11.3 11.3 0 0 1 36.9 39.9 A6.3 6.3 0 0 1 36 48.8 L14 48.8 A7.3 7.3 0 1 1 20.9 39" fill="none" stroke="#00f6f6" stroke-width="3.0" stroke-linecap="round" stroke-linejoin="round"/></svg>
  <svg class="a wi" style="left:95px;top:115px" width="40.3" height="40.3" viewBox="0 0 60 60"><path d="M24.8 24 A7.8 7.8 0 1 1 36.5 30.75 M32.6 13.4 V9 M40.1 16.5 L43.2 13.4 M43 24 H47.4 M40.1 31.5 L43.2 34.6 M25.1 16.5 L22 13.4 M22.2 24 H17.6" fill="none" stroke="#fdc30c" stroke-width="2.6" stroke-linecap="round"/><path d="M15.4 33.1 A11.3 11.3 0 0 1 36.9 39.9 A6.3 6.3 0 0 1 36 48.8 L14 48.8 A7.3 7.3 0 1 1 20.9 39" fill="none" stroke="#00f6f6" stroke-width="3.0" stroke-linecap="round" stroke-linejoin="round"/></svg>
  <svg class="a wi" style="left:53px;top:117px" width="36" height="34" viewBox="0 0 36 34"><path d="M6.5 24 A6.2 6.2 0 0 1 9 12.5 A7.6 7.6 0 0 1 24.3 11.5 A4.9 4.9 0 0 1 26 23.8" fill="none" stroke="#00f6f6" stroke-width="2" stroke-linecap="round"/><path d="M10.5 13 A6 6 0 0 1 14.2 18" fill="none" stroke="#00f6f6" stroke-width="2" stroke-linecap="round"/><path d="M14 22 L11 28 M18 20 L14.5 31 M22 21 L19.5 27 M26 20 L23 30" stroke="#7b78f2" stroke-width="2" stroke-linecap="round"/></svg>
  <svg class="a wi" style="left:138px;top:117px" width="38" height="34" viewBox="0 0 38 34"><path d="M9.96 23.6 A6 6 0 1 1 13.05 12.06 A7.5 7.5 0 1 1 27.3 16.47 A4.2 4.2 0 0 1 30.6 23.1" fill="none" stroke="#00f6f6" stroke-width="2" stroke-linecap="round"/><path d="M15.4 33.1 A11.3 11.3 0 0 1 36.9 39.9 A6.3 6.3 0 0 1 36 48.8 L14 48.8 A7.3 7.3 0 1 1 20.9 39" transform="translate(7.2 0.4) scale(0.565)" fill="none" stroke="#00f6f6" stroke-width="3.55" stroke-linecap="round" stroke-linejoin="round"/></svg>
  <div class="t ws" style="left:67px;top:17px;font-size:13px;color:#fff">吴中</div>
  <div class="a" style="left:67px;top:39px;width:44px;height:19px;background:#21b70f;border-radius:2px"></div>
  <div class="t" style="left:71px;top:42px;font-size:12px;color:#fff">空气优</div>
  <div class="t ws" style="left:67px;top:66px;font-size:13px;color:#fff">多云</div>
  <div class="t ws" style="left:114px;top:28px;font-size:40px;color:#fff">29</div>
  <div class="t ws" style="left:159px;top:38px;font-size:12px;color:#fff">°C</div>
  <div class="t ws" style="left:14.5px;top:154px;font-size:12.5px;color:#fff">今天</div>
  <div class="t ws" style="left:57px;top:154px;font-size:12.5px;color:#fff">明天</div>
  <div class="t ws" style="left:101px;top:154px;font-size:12.5px;color:#fff">周四</div>
  <div class="t ws" style="left:145px;top:154px;font-size:12.5px;color:#fff">周五</div>
</div>
<!-- calendar -->
<div class="card" style="left:422px;top:301px;width:377px;height:184px">
  <div class="ttl">工作日程</div>
  <svg class="a" style="left:92px;top:14px" width="14" height="14" viewBox="0 0 14 14"><path d="M1.42 7.49 A5.6 5.6 0 0 1 11.29 3.4 M12.58 6.51 A5.6 5.6 0 0 1 2.71 10.6" fill="none" stroke="#3d86d8" stroke-width="1.4"/><path d="M12.6 5.0 L12.6 1.9 L9.6 4.6 Z M1.4 9.0 L1.4 12.1 L4.4 9.4 Z" fill="#3d86d8"/></svg>
  <div class="t" style="left:109px;top:14px;font-size:13px;color:#3d86d8">刷新</div>
  <div class="t" style="left:264px;top:13px;font-size:16px;color:#888">2021年05月</div>
  <div class="t" style="left:17.1px;width:40px;text-align:center;top:50px;font-size:13px;color:#999">一</div>
  <div class="t" style="left:67.4px;width:40px;text-align:center;top:50px;font-size:13px;color:#999">二</div>
  <div class="t" style="left:117.7px;width:40px;text-align:center;top:50px;font-size:13px;color:#999">三</div>
  <div class="t" style="left:168.0px;width:40px;text-align:center;top:50px;font-size:13px;color:#999">四</div>
  <div class="t" style="left:218.3px;width:40px;text-align:center;top:50px;font-size:13px;color:#999">五</div>
  <div class="t" style="left:268.6px;width:40px;text-align:center;top:50px;font-size:13px;color:#999">六</div>
  <div class="t" style="left:318.9px;width:40px;text-align:center;top:50px;font-size:13px;color:#999">日</div>
  <div class="t" style="left:17.1px;width:40px;text-align:center;top:88px;font-size:14px;color:#333">17</div>
  <div class="t" style="left:17.1px;width:40px;text-align:center;top:135px;font-size:14px;color:#333">24</div>
  <div class="t" style="left:67.4px;width:40px;text-align:center;top:88px;font-size:14px;color:#333">18</div>
  <div class="t" style="left:67.4px;width:40px;text-align:center;top:135px;font-size:14px;color:#333">25</div>
  <div class="t" style="left:117.7px;width:40px;text-align:center;top:88px;font-size:14px;color:#333">19</div>
  <div class="t" style="left:117.7px;width:40px;text-align:center;top:135px;font-size:14px;color:#333">26</div>
  <div class="t" style="left:168.0px;width:40px;text-align:center;top:88px;font-size:14px;color:#333">20</div>
  <div class="t" style="left:168.0px;width:40px;text-align:center;top:135px;font-size:14px;color:#333">27</div>
  <div class="t" style="left:218.3px;width:40px;text-align:center;top:88px;font-size:14px;color:#333">21</div>
  <div class="t" style="left:218.3px;width:40px;text-align:center;top:135px;font-size:14px;color:#333">28</div>
  <div class="t" style="left:268.6px;width:40px;text-align:center;top:88px;font-size:14px;color:#bbb">22</div>
  <div class="t" style="left:268.6px;width:40px;text-align:center;top:135px;font-size:14px;color:#bbb">29</div>
  <div class="t" style="left:318.9px;width:40px;text-align:center;top:88px;font-size:14px;color:#bbb">23</div>
  <div class="t" style="left:318.9px;width:40px;text-align:center;top:135px;font-size:14px;color:#bbb">30</div>
  <div class="a" style="left:70.5px;top:125.5px;width:33px;height:33px;border-radius:50%;border:1px solid #f5a623"></div>
</div>
<!-- approval -->
<div class="card" style="left:807px;top:301px;width:184px;height:184px">
  <div class="ttl">我的审批</div>
  <svg class="a" style="left:0;top:0" width="60" height="150" viewBox="0 0 60 150"><path d="M24.5 137.7 V111.2 L14.7 117.8" fill="none" stroke="#444" stroke-width="2.4" stroke-linejoin="miter"/></svg><div class="num" style="left:31px;-webkit-text-stroke:0.7px #fff">2</div>
  <div class="sub">待办</div>
  <div class="circ" style="background:#66c97e"><svg width="48" height="48" viewBox="0 0 48 48"><path d="M9 10 H21 V17 H29 V36.6 H9 Z" fill="#fff"/><path d="M22.2 10 L29 16 H22.2 Z" fill="#fff"/><path d="M13.5 32 L16.4 28 L18.3 31 L20.6 29.8 L22.5 31.2" fill="none" stroke="#66c97e" stroke-width="0.9"/><path d="M22.5 31.5 L23.07 27.56 L35.8 16.53 Q37.5 15.5 39.2 20.47 L26.47 31.5 Z" fill="#fff" stroke="#66c97e" stroke-width="1.6" stroke-linejoin="round"/><path d="M33.3 18.6 L36.7 22.5" stroke="#66c97e" stroke-width="1"/></svg></div>
</div>

<!-- demo band -->
<div class="a" style="left:38px;top:485px;width:953px;height:7px;background:rgba(160,180,205,.13)"></div>
<div class="a" style="left:30px;top:492px;width:983px;height:47px;background:#dde7f4"></div>
<div class="t" style="left:49px;top:503.5px;font-size:17.5px;color:#666;letter-spacing:0.3px">demo</div>

<div class="card" style="left:39px;top:539px;width:184px;height:184px">
  <div class="ttl">我的未清销售订单</div>
  <div class="num" style="color:#e00000;-webkit-text-stroke:0.3px #fff">35</div>
  <div class="circ" style="background:#66c88e"><svg width="48" height="48" viewBox="0 0 48 48"><path d="M12.2 11 H36 V31.8 L24 36.8 L12.2 31.8 Z" fill="#fff"/><rect x="14" y="12.8" width="20.4" height="3" fill="#66c88e"/><path d="M14.5 14.3 H34" stroke="#fff" stroke-width="1.6" stroke-dasharray="1 1" opacity=".6"/><path d="M14.8 18 H33.4 V30.6 L24 34.4 L14.8 30.6 Z" fill="none" stroke="#66c88e" stroke-width="0.9" stroke-dasharray="1 0.8"/><path d="M16.6 19.6 H31.6 V29.2 L24 32.2 L16.6 29.2 Z" fill="#66c88e"/><circle cx="24" cy="25.6" r="5" fill="#fff"/><path d="M26 23.6 C25.5 22.8 22.2 22.7 22.2 24.3 C22.2 25.9 25.9 25.1 25.9 26.9 C25.9 28.5 22.6 28.4 22 27.6" fill="none" stroke="#66c88e" stroke-width="1.1"/></svg></div>
</div>
<div class="card" style="left:231px;top:539px;width:377px;height:184px">
  <div class="ttl">报价转化率</div>
  <div class="t" style="left:11px;top:105px;font-size:38px;color:#ee5b5b;letter-spacing:-0.5px;-webkit-text-stroke:0.3px #fff">-85</div>
  <svg class="a" style="left:70px;top:110px" width="15" height="9" viewBox="0 0 15 9"><path d="M0.5 0.5 H14 L7.25 8.5 Z" fill="#ee5b5b"/></svg>
  <div class="t" style="left:71px;top:127px;font-size:14px;color:#ee5b5b">%</div>
  <div class="t" style="left:13px;top:159px;font-size:13px;color:#999">本季度</div>
  <div class="a" style="left:246px;top:50px;width:22px;height:35px;background:#9c27b0"></div>
  <div class="a" style="left:291px;top:85px;width:22px;height:28px;background:#ff1a00"></div>
  <div class="a" style="left:336px;top:85px;width:22px;height:28px;background:#ff1a00"></div>
  <div class="t" style="left:202px;top:93px;font-size:11px;font-weight:bold;color:#111">-360</div>
  <div class="t" style="left:330px;top:99px;font-size:11.5px;font-weight:bold;color:#f4f4f4;letter-spacing:-0.3px;text-shadow:-1px 0 #111,1px 0 #111,0 -1px #111,0 1px #111,1px 1px #111,-1px -1px #111,1px -1px #111,-1px 1px #111">-70.3K</div>
  <div class="t" style="left:202px;top:135px;width:20px;text-align:center;font-size:11px;color:#666">Q1</div>
  <div class="t" style="left:247px;top:135px;width:20px;text-align:center;font-size:11px;color:#666">Q2</div>
  <div class="t" style="left:292px;top:135px;width:20px;text-align:center;font-size:11px;color:#666">Q3</div>
  <div class="t" style="left:337px;top:135px;width:20px;text-align:center;font-size:11px;color:#666">Q4</div>
  <svg class="a" style="left:195px;top:159px" width="14" height="14" viewBox="0 0 14 14"><path d="M1.42 7.49 A5.6 5.6 0 0 1 11.29 3.4 M12.58 6.51 A5.6 5.6 0 0 1 2.71 10.6" fill="none" stroke="#3d86d8" stroke-width="1.5"/><path d="M12.6 5.0 L12.6 1.9 L9.6 4.6 Z M1.4 9.0 L1.4 12.1 L4.4 9.4 Z" fill="#3d86d8"/></svg>
  <div class="t" style="left:213px;top:158px;font-size:14px;color:#3d86d8">2 分钟前</div>
</div>
<div class="card" style="left:616px;top:539px;width:184px;height:184px">
  <div class="ttl" style="left:12px">延期交付预测</div>
  <div class="t" style="left:5px;top:58px;font-size:13px;color:#888">延迟</div>
  <div class="t" style="right:7px;top:59px;font-size:13px;color:#e53935">11%</div>
  <div class="a" style="left:6px;top:74px;width:171px;height:5px;background:#ddd"><div class="a" style="left:0;top:0;width:19px;height:5px;background:#d50000"></div></div>
  <div class="t" style="left:5px;top:83px;font-size:13px;color:#888">提前</div>
  <div class="t" style="right:7px;top:84px;font-size:13px;color:#ef7d16">19%</div>
  <div class="a" style="left:6px;top:99px;width:171px;height:5px;background:#ddd"><div class="a" style="left:0;top:0;width:32px;height:5px;background:#ef6c00"></div></div>
  <div class="t" style="left:5px;top:108px;font-size:13px;color:#888">按时</div>
  <div class="t" style="right:7px;top:109px;font-size:13px;color:#43a047">70%</div>
  <div class="a" style="left:6px;top:123px;width:171px;height:5px;background:#ddd"><div class="a" style="left:0;top:0;width:120px;height:5px;background:#43a047"></div></div>
  <svg class="a" style="left:11px;top:159px" width="14" height="14" viewBox="0 0 14 14"><path d="M1.42 7.49 A5.6 5.6 0 0 1 11.29 3.4 M12.58 6.51 A5.6 5.6 0 0 1 2.71 10.6" fill="none" stroke="#3d86d8" stroke-width="1.5"/><path d="M12.6 5.0 L12.6 1.9 L9.6 4.6 Z M1.4 9.0 L1.4 12.1 L4.4 9.4 Z" fill="#3d86d8"/></svg>
  <div class="t" style="left:29px;top:158px;font-size:14px;color:#3d86d8">2 分钟前</div>
</div>
<div class="card" style="left:808px;top:539px;width:184px;height:184px">
  <div class="ttl">营收预期</div>
  <div class="t" style="left:12px;top:40px;font-size:14px;color:#999">2019, Q4</div>
  <div class="t" style="left:116px;top:75px;font-size:15.5px;font-weight:bold;color:#b50000">918K</div>
  <div class="a" style="left:6px;top:89px;width:172px;height:26px;background:#d6625f"></div>
  <div class="a" style="left:6px;top:95px;width:105px;height:13px;background:#b80000"></div>
  <div class="a" style="left:119px;top:92px;width:3px;height:19px;background:#000"></div>
  <div class="t" style="left:6px;top:126px;font-size:11px;color:#666">0</div>
  <div class="t" style="left:50px;top:126px;font-size:11px;color:#666">500K</div>
  <div class="t" style="left:113px;top:126px;font-size:11px;color:#666">1M</div>
  <div class="t" style="left:155px;top:126px;font-size:11px;color:#666">1.5M</div>
  <div class="t" style="left:12px;top:159px;font-size:14px;color:#999">RMB</div>
</div>

<!-- scrollbar -->
<div class="a" style="left:1016px;top:89px;width:12px;height:556px;border-radius:6px;background:#8b939e"></div>

<!-- dropdown -->
<div class="a" style="left:983px;top:47px;width:18px;height:4px;background:#fff"></div>
<div class="a" style="left:886px;top:50px;width:130px;height:246px;background:#fff;box-shadow:0 1px 4px rgba(0,0,0,.3)">
  <div class="t" style="left:38px;top:14px;font-size:18px;font-weight:bold;color:#666">管理员</div>
  <svg class="a" style="left:10px;top:51px" width="16" height="17" viewBox="0 0 16 17"><path d="M8 1.2 L14 3.5 V8.5 C14 12 11.2 14.5 8 15.8 C4.8 14.5 2 12 2 8.5 V3.5 Z" fill="none" stroke="#ef5a28" stroke-width="1.6" stroke-linejoin="round"/><circle cx="8" cy="7.2" r="1.9" fill="none" stroke="#ef5a28" stroke-width="1.5"/><path d="M8 9 V12" stroke="#ef5a28" stroke-width="1.6"/></svg>
  <div class="t" style="left:36px;top:53px;font-size:13px;color:#f04f22">授权管理</div>
  <div class="a" style="left:0;top:78px;width:130px;height:1px;background:#ddd"></div>
  <svg class="a" style="left:10px;top:89px" width="16" height="16" viewBox="0 0 16 16"><path d="M7.5 2 H2.5 V14 H13.5 V9" fill="none" stroke="#666" stroke-width="1.3"/><path d="M7 10 L7.5 7.8 L13 2.3 L14.6 3.9 L9.1 9.4 Z" fill="none" stroke="#666" stroke-width="1.3" stroke-linejoin="round"/></svg>
  <div class="t" style="left:36px;top:90px;font-size:13px;color:#333">编辑主页</div>
  <svg class="a" style="left:10px;top:121px" width="16" height="17" viewBox="0 0 16 17"><circle cx="7" cy="5" r="3.6" fill="none" stroke="#666" stroke-width="1.3"/><path d="M1.5 16 C1.5 12 3.5 9.5 7 9.5 C8 9.5 8.6 9.7 9.2 10" fill="none" stroke="#666" stroke-width="1.3"/><circle cx="12.2" cy="13" r="1.6" fill="none" stroke="#666" stroke-width="1.2"/><path d="M12.2 10 V10.8 M12.2 15.2 V16 M9.4 13 H10.2 M14.2 13 H15 M10.2 11 L10.7 11.5 M13.7 14.5 L14.2 15 M10.2 15 L10.7 14.5 M13.7 11.5 L14.2 11" stroke="#666" stroke-width="1.1"/></svg>
  <div class="t" style="left:36px;top:122px;font-size:13px;color:#333">个人设置</div>
  <svg class="a" style="left:10px;top:153px" width="16" height="16" viewBox="0 0 16 16"><path d="M7.5 2 H2.5 V14 H13.5 V9" fill="none" stroke="#666" stroke-width="1.3"/><path d="M7 10 L7.5 7.8 L13 2.3 L14.6 3.9 L9.1 9.4 Z" fill="none" stroke="#666" stroke-width="1.3" stroke-linejoin="round"/></svg>
  <div class="t" style="left:36px;top:155px;font-size:13px;color:#333">修改密码</div>
  <div class="a" style="left:0;top:177px;width:129px;height:31px;border:2px solid #e84a4a"></div>
  <svg class="a" style="left:9px;top:184px" width="18" height="18" viewBox="0 0 18 18"><path d="M5.5 4.2 A6.8 6.8 0 1 0 12.5 4.2" fill="none" stroke="#666" stroke-width="1.4"/><path d="M9 1.5 V8.5" stroke="#666" stroke-width="1.4"/></svg>
  <div class="t" style="left:36px;top:187px;font-size:13px;color:#333">退出登录</div>
  <div class="a" style="left:0;top:211px;width:130px;height:1px;background:#ddd"></div>
  <svg class="a" style="left:9px;top:221px" width="18" height="18" viewBox="0 0 18 18"><circle cx="9" cy="9" r="7.2" fill="none" stroke="#666" stroke-width="1.3"/><circle cx="9.6" cy="5.4" r="0.9" fill="#666"/><path d="M8 8 H9.8 L8.6 12.6 H10.2" fill="none" stroke="#666" stroke-width="1.2"/></svg>
  <div class="t" style="left:36px;top:223px;font-size:13px;color:#333">关于</div>
</div>
</body></html>
